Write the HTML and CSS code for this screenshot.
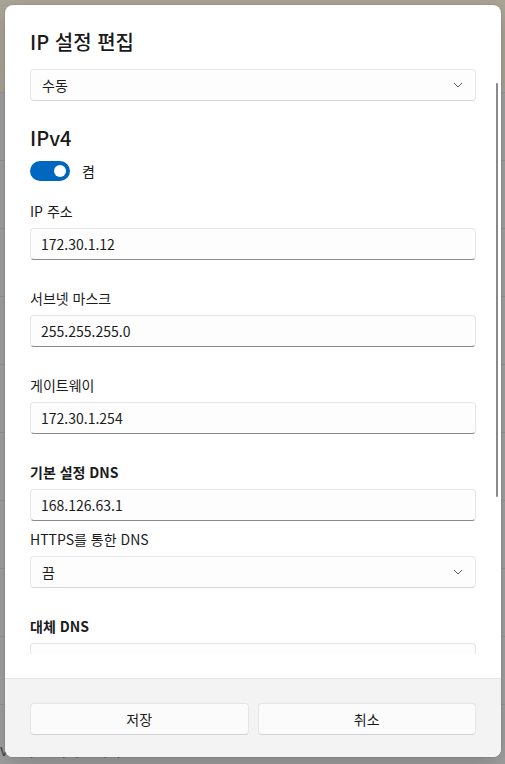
FILE: index.html
```html
<!DOCTYPE html>
<html lang="ko">
<head>
<meta charset="utf-8">
<title>IP 설정 편집</title>
<link rel="stylesheet" href="styles.css">
</head>
<body>
<div class="backdrop">
  <div class="bg-head"></div>
  <div class="bg-row"></div>
  <div class="bg-row"></div>
  <div class="bg-row"></div>
  <div class="bg-row"></div>
  <div class="bg-row"></div>
  <div class="bg-row"></div>
  <div class="bg-row"></div>
  <div class="bg-row"></div>
  <div class="bg-row"></div>
  <div class="bg-last"><span class="bg-k">IPv4 기본 게이트웨이</span><span class="bg-v">172.30.1.254</span></div>
</div>

<div class="dialog">
  <div class="body">
    <h1 class="title">IP 설정 편집</h1>
    <div class="scroll">
      <div class="combo"><span>수동</span><svg class="chev" width="10" height="6" viewBox="0 0 10 6"><path d="M1 1 L5 5 L9 1" fill="none" stroke="#5c5c5c" stroke-width="1"/></svg></div>

      <h2 class="section">IPv4</h2>
      <div class="toggle-row">
        <span class="toggle"><span class="knob"></span></span>
        <span class="toggle-text">켬</span>
      </div>

      <div class="field">
        <div class="label">IP 주소</div>
        <div class="input">172.30.1.12</div>
      </div>
      <div class="field">
        <div class="label">서브넷 마스크</div>
        <div class="input">255.255.255.0</div>
      </div>
      <div class="field">
        <div class="label">게이트웨이</div>
        <div class="input">172.30.1.254</div>
      </div>
      <div class="field">
        <div class="label bold">기본 설정 DNS</div>
        <div class="input">168.126.63.1</div>
        <div class="label sub">HTTPS를 통한 DNS</div>
        <div class="combo"><span>끔</span><svg class="chev" width="10" height="6" viewBox="0 0 10 6"><path d="M1 1 L5 5 L9 1" fill="none" stroke="#5c5c5c" stroke-width="1"/></svg></div>
      </div>
      <div class="field">
        <div class="label bold">대체 DNS</div>
        <div class="input"></div>
      </div>
    </div>
  </div>
  <div class="footer">
    <button class="btn">저장</button>
    <button class="btn">취소</button>
  </div>
  <div class="scrollthumb"></div>
</div>
</body>
</html>
```

FILE: styles.css
```css
* { box-sizing: border-box; }
html, body { margin: 0; padding: 0; }
body {
  width: 505px;
  height: 764px;
  overflow: hidden;
  background: #a0a0a0;
  font-family: "Noto Sans CJK KR", "Noto Sans", sans-serif;
  color: #1b1b1b;
  position: relative;
}

/* dimmed page behind the dialog */
.backdrop { display: flex; flex-direction: column; height: 764px; }
.bg-head { height: 93px; background: #aaa597; border-bottom: 1px solid #9a9a9a; }
.bg-row { height: 68px; border-bottom: 1px solid #969696; background: #a2a2a2; }
.bg-last {
  flex: 1;
  display: flex;
  align-items: flex-start;
  padding-top: 36px;
  font-size: 15px;
  color: #404040;
  line-height: 18px;
}
.bg-k { margin-left: -14px; width: 205px; }
.bg-v { color: #5a5a5a; }

/* dialog */
.dialog {
  position: absolute;
  left: 5px;
  top: 5px;
  width: 496px;
  height: 752px;
  background: #ffffff;
  border-radius: 8px;
  overflow: hidden;
  display: flex;
  flex-direction: column;
  box-shadow: 0 8px 24px rgba(0,0,0,0.18), 0 0 0 1px rgba(0,0,0,0.06);
}
.body {
  flex: 1;
  display: flex;
  flex-direction: column;
  padding: 23px 25px 24px 25px;
  min-height: 0;
}
.title {
  margin: 0 0 13px 0;
  font-size: 20px;
  line-height: 28px;
  font-weight: 500;
  color: #1a1a1a;
}
.scroll {
  flex: 1;
  overflow: hidden;
  min-height: 0;
}

.combo {
  height: 32px;
  border: 1px solid #e8e8e8;
  border-bottom-color: #d6d6d6;
  border-radius: 4px;
  background: #fdfdfd;
  display: flex;
  align-items: center;
  justify-content: space-between;
  padding: 0 12px 0 11px;
  font-size: 14px;
  line-height: 20px;
}
.chev { display: block; }

.section {
  margin: 23px 0 9px 0;
  font-size: 20px;
  line-height: 28px;
  font-weight: 500;
  color: #1a1a1a;
}
.toggle-row {
  display: flex;
  align-items: center;
  gap: 12px;
  height: 20px;
  margin-bottom: 20px;
}
.toggle {
  width: 40px;
  height: 20px;
  border-radius: 10px;
  background: #0067c0;
  display: flex;
  align-items: center;
  justify-content: flex-end;
  padding-right: 4px;
}
.knob { width: 12px; height: 12px; border-radius: 50%; background: #ffffff; }
.toggle-text { font-size: 14px; line-height: 20px; }

.field { margin-bottom: 28px; }
.label {
  font-size: 14px;
  line-height: 20px;
  margin-bottom: 7px;
  color: #1b1b1b;
}
.label.bold { font-weight: 700; }
.label.sub { margin-top: 8px; }
.input {
  height: 32px;
  border: 1px solid #e6e6e6;
  border-bottom: 1px solid #8a8a8a;
  border-radius: 4px;
  background: #fdfdfd;
  padding: 0 10px;
  font-size: 14px;
  line-height: 30px;
  color: #1b1b1b;
}

.footer {
  height: 79px;
  flex: none;
  background: #f3f3f3;
  border-top: 1px solid #e5e5e5;
  padding: 24px 25px 0 25px;
  display: grid;
  grid-template-columns: 1fr 1fr;
  column-gap: 9px;
  align-content: start;
}
.btn {
  height: 32px;
  border: 1px solid #e5e5e5;
  border-bottom-color: #d0d0d0;
  border-radius: 4px;
  background: #fbfbfb;
  font-family: inherit;
  font-size: 14px;
  color: #1b1b1b;
  padding: 0;
}

.scrollthumb {
  position: absolute;
  left: 491px;
  top: 78px;
  width: 2px;
  height: 414px;
  border-radius: 1px;
  background: #8a8a8a;
}
```
